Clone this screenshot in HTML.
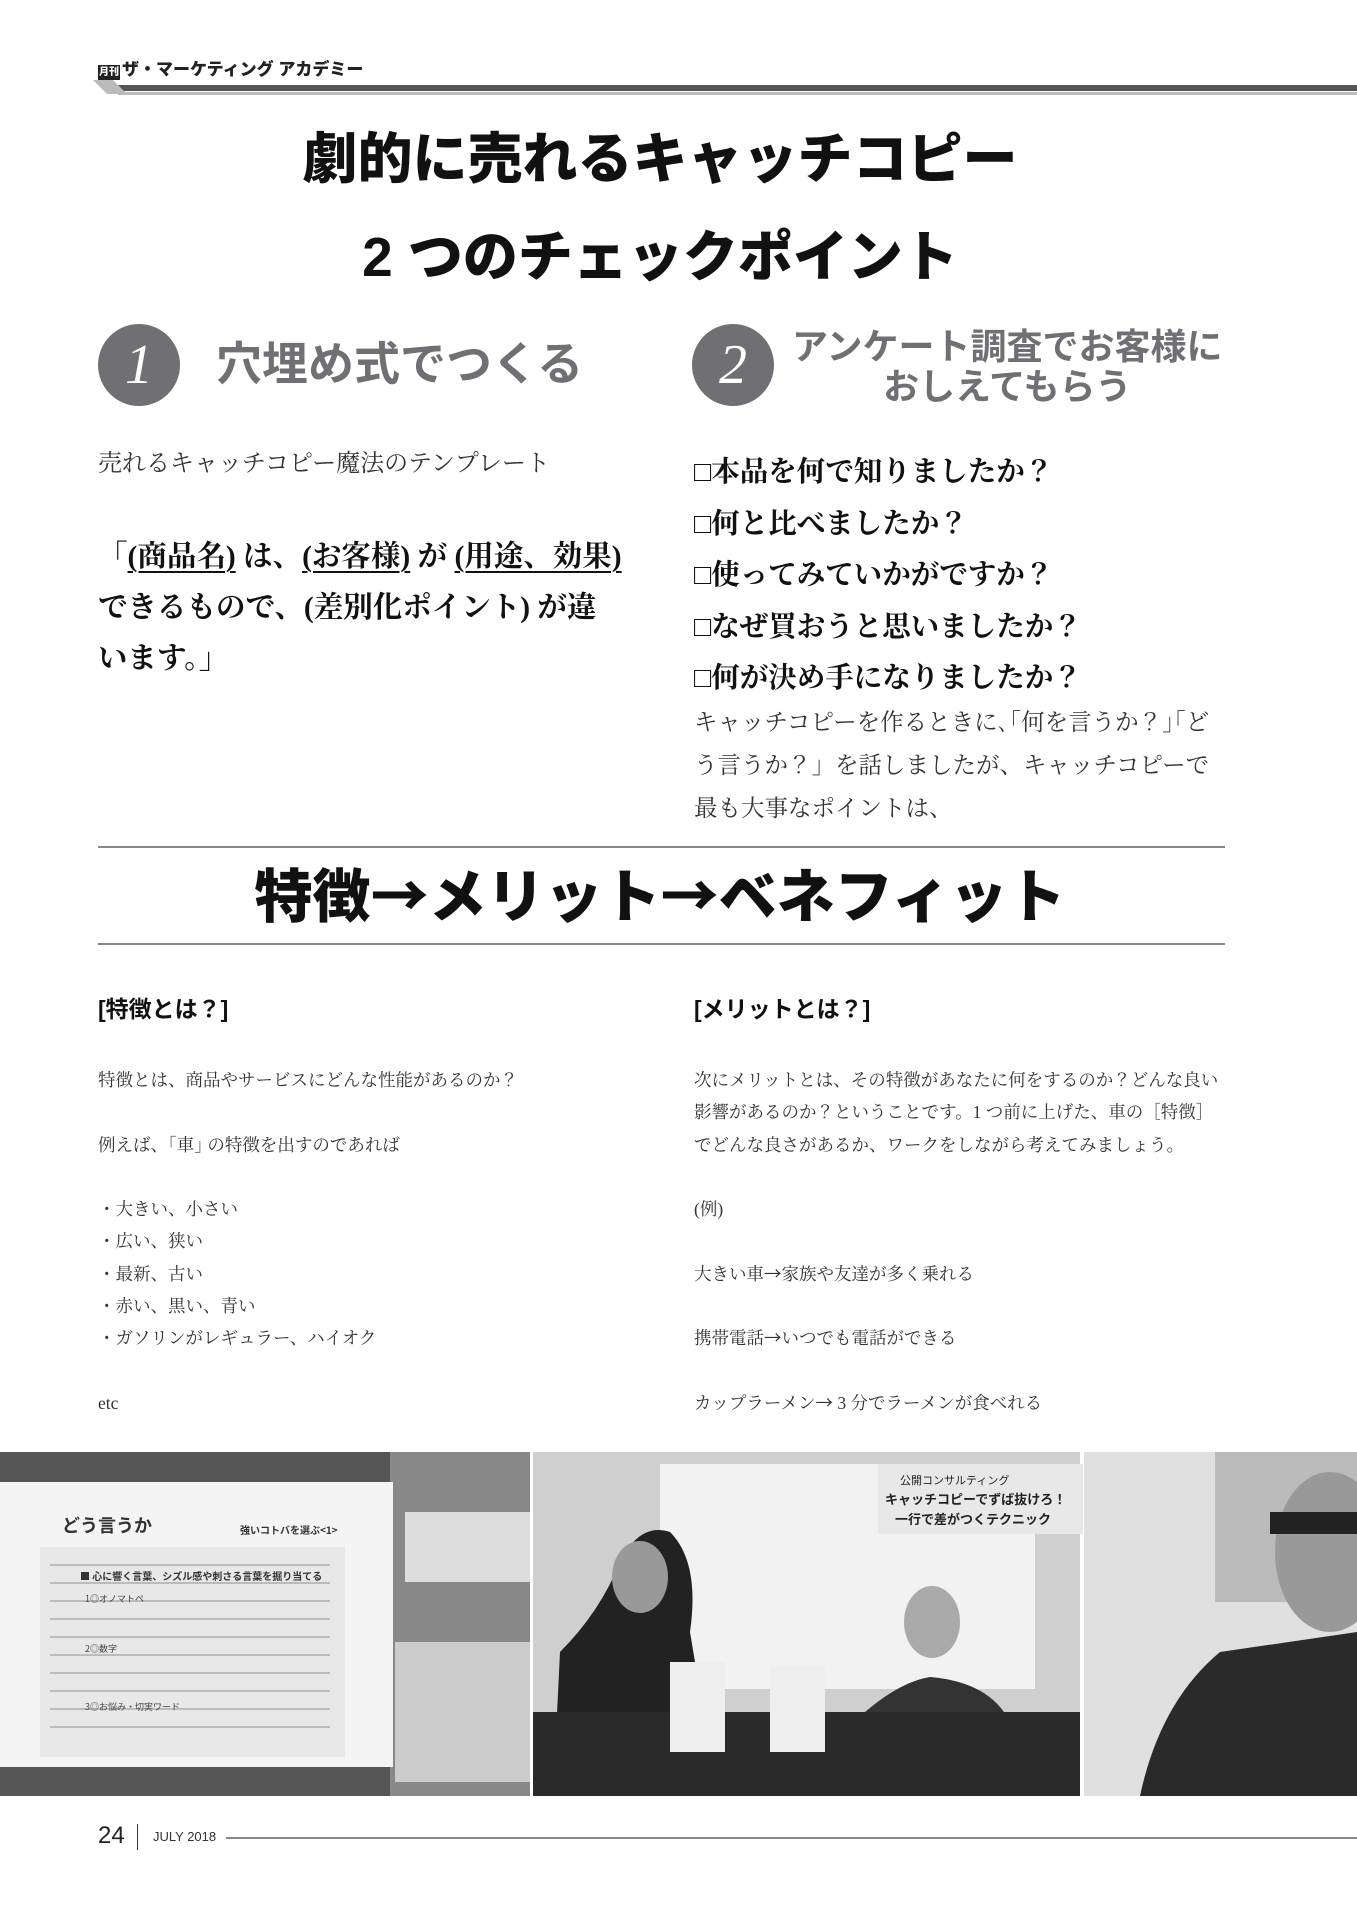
<!DOCTYPE html>
<html><head><meta charset="utf-8"><style>
*{margin:0;padding:0}
body{width:1357px;height:1920px;position:relative;background:#fff;overflow:hidden;font-family:"Liberation Serif","Noto Serif CJK JP",serif;color:#222}
.a{position:absolute;white-space:nowrap;line-height:1.2}
.g{font-family:"Liberation Sans","Noto Sans CJK JP",sans-serif;font-weight:900}
.m{font-family:"Liberation Serif","Noto Serif CJK JP",serif}
.c{position:absolute;border-radius:50%;background:#6f6f74;color:#fff;text-align:center;font-family:"Liberation Serif",serif;font-style:italic}
.hr{position:absolute;height:2px;background:#888}
.ar{font-family:"Noto Sans CJK JP",sans-serif}
u{text-underline-offset:5px;text-decoration-thickness:2px}
</style></head><body>
<div class="a g" style="left:98px;top:60px;font-size:17px;"><span style="background:#222;color:#fff;font-size:10px;padding:2px 1px;margin-right:2px">月刊</span>ザ・マーケティング アカデミー</div>
<div style="position:absolute;left:110px;top:85px;width:1247px;height:6px;background:#555"></div>
<div style="position:absolute;left:100px;top:80px;width:20px;height:14px;background:#bbb;transform:skewX(45deg)"></div>
<div style="position:absolute;left:118px;top:92px;width:1239px;height:3px;background:#bbb"></div>

<div class="a g" style="left:0;width:1320px;text-align:center;top:126px;font-size:55px;color:#111">劇的に売れるキャッチコピー</div>
<div class="a g" style="left:0;width:1320px;text-align:center;top:224px;font-size:55px;color:#111">2 つのチェックポイント</div>

<div class="c" style="left:98px;top:324px;width:82px;height:82px;line-height:82px;font-size:56px">1</div>
<div class="a g" style="left:216px;top:337px;font-size:46px;color:#6f6f74;font-weight:700">穴埋め式でつくる</div>
<div class="c" style="left:692px;top:324px;width:82px;height:82px;line-height:82px;font-size:56px">2</div>
<div class="a g" style="left:792px;top:327px;font-size:36px;color:#6f6f74;font-weight:700;line-height:40px;text-align:center">アンケート調査でお客様に<br>おしえてもらう</div>

<div class="a m" style="left:98px;top:450px;font-size:24px;color:#333">売れるキャッチコピー魔法のテンプレート</div>
<div class="a m" style="left:98px;top:532px;font-size:29.5px;font-weight:700;line-height:51px;color:#111">「<u>(商品名)</u> は、<u>(お客様)</u> が <u>(用途、効果)</u><br>できるもので、(差別化ポイント) が違<br>います。」</div>

<div class="a m" style="left:694px;top:447px;font-size:28.5px;font-weight:700;line-height:51.5px;color:#111">□本品を何で知りましたか？<br>□何と比べましたか？<br>□使ってみていかがですか？<br>□なぜ買おうと思いましたか？<br>□何が決め手になりましたか？</div>
<div class="a m" style="left:694px;top:702px;font-size:23.5px;line-height:43px;color:#333">キャッチコピーを作るときに､｢何を言うか？｣｢ど<br>う言うか？」を話しましたが、キャッチコピーで<br>最も大事なポイントは、</div>

<div class="hr" style="left:98px;top:846px;width:1127px"></div>
<div class="a g" style="left:0;width:1320px;text-align:center;top:858px;font-size:58px;color:#111">特徴<span class="ar">→</span>メリット<span class="ar">→</span>ベネフィット</div>
<div class="hr" style="left:98px;top:943px;width:1127px"></div>

<div class="a g" style="left:98px;top:996px;font-size:23px;font-weight:700;color:#111">[特徴とは？]</div>
<div class="a g" style="left:694px;top:996px;font-size:23px;font-weight:700;color:#111">[メリットとは？]</div>
<div class="a m" style="left:98px;top:1064px;font-size:17.5px;line-height:32.3px;color:#333">特徴とは、商品やサービスにどんな性能があるのか？<br><br>例えば、｢車｣ の特徴を出すのであれば<br><br>・大きい、小さい<br>・広い、狭い<br>・最新、古い<br>・赤い、黒い、青い<br>・ガソリンがレギュラー、ハイオク<br><br>etc</div>
<div class="a m" style="left:694px;top:1064px;font-size:17.5px;line-height:32.3px;color:#333">次にメリットとは、その特徴があなたに何をするのか？どんな良い<br>影響があるのか？ということです。1 つ前に上げた、車の［特徴］<br>でどんな良さがあるか、ワークをしながら考えてみましょう。<br><br>(例)<br><br>大きい車<span class="ar">→</span>家族や友達が多く乗れる<br><br>携帯電話<span class="ar">→</span>いつでも電話ができる<br><br>カップラーメン<span class="ar">→</span> 3 分でラーメンが食べれる</div>

<svg style="position:absolute;left:0;top:1452px" width="1357" height="344" font-family="Noto Sans CJK JP,sans-serif">
<rect x="0" y="0" width="530" height="344" fill="#555"/>
<rect x="390" y="0" width="140" height="344" fill="#888"/>
<rect x="395" y="190" width="135" height="140" fill="#ccc"/>
<rect x="405" y="60" width="125" height="70" fill="#ddd"/>
<rect x="0" y="30" width="393" height="285" fill="#f4f4f4"/>
<rect x="40" y="95" width="305" height="210" fill="#e8e8e8"/>
<g fill="#bbb"><rect x="50" y="112" width="280" height="2"/><rect x="50" y="130" width="280" height="2"/><rect x="50" y="148" width="280" height="2"/><rect x="50" y="166" width="280" height="2"/><rect x="50" y="184" width="280" height="2"/><rect x="50" y="202" width="280" height="2"/><rect x="50" y="220" width="280" height="2"/><rect x="50" y="238" width="280" height="2"/><rect x="50" y="256" width="280" height="2"/><rect x="50" y="274" width="280" height="2"/></g>
<text x="80" y="128" font-size="10" font-weight="bold" fill="#333">■ 心に響く言葉、シズル感や刺さる言葉を掘り当てる</text>
<text x="85" y="150" font-size="9" fill="#444">1◎オノマトペ</text>
<text x="85" y="200" font-size="9" fill="#444">2◎数字</text>
<text x="85" y="258" font-size="9" fill="#444">3◎お悩み・切実ワード</text>
<text x="62" y="80" font-size="18" font-weight="bold" fill="#333">どう言うか</text>
<text x="240" y="82" font-size="10" font-weight="bold" fill="#333">強いコトバを選ぶ&lt;1&gt;</text>
<rect x="533" y="0" width="547" height="344" fill="#cfcfcf"/>
<rect x="660" y="12" width="375" height="225" fill="#f2f2f2"/>
<rect x="878" y="12" width="205" height="70" fill="#e8e8e8"/>
<text x="900" y="32" font-size="11" fill="#222">公開コンサルティング</text>
<text x="885" y="52" font-size="13" font-weight="bold" fill="#222">キャッチコピーでずば抜けろ！</text>
<text x="895" y="72" font-size="13" font-weight="bold" fill="#222">一行で差がつくテクニック</text>
<path d="M553 344 L560 200 Q600 160 620 110 Q640 70 670 80 Q700 110 690 180 L700 240 L680 344Z" fill="#222"/>
<ellipse cx="640" cy="125" rx="28" ry="36" fill="#999"/>
<path d="M860 344 L865 260 Q900 230 930 225 Q990 230 1010 270 L1015 344Z" fill="#333"/>
<ellipse cx="932" cy="170" rx="28" ry="36" fill="#aaa"/>
<rect x="533" y="260" width="547" height="84" fill="#2a2a2a"/>
<rect x="670" y="210" width="55" height="90" fill="#eee"/>
<rect x="770" y="215" width="55" height="85" fill="#eee"/>
<rect x="1084" y="0" width="273" height="344" fill="#e0e0e0"/>
<rect x="1215" y="0" width="142" height="150" fill="#bbb"/>
<path d="M1140 344 Q1160 250 1220 200 L1357 180 L1357 344Z" fill="#2a2a2a"/>
<ellipse cx="1330" cy="100" rx="55" ry="80" fill="#999"/>
<rect x="1270" y="60" width="87" height="22" fill="#222"/>
</svg>

<div class="a" style="left:98px;top:1822px;font-size:24px;font-family:'Liberation Sans',sans-serif;color:#222">24</div>
<div style="position:absolute;left:137px;top:1824px;width:1px;height:26px;background:#333"></div>
<div class="a" style="left:153px;top:1829px;font-size:13px;font-family:'Liberation Sans',sans-serif;color:#333">JULY 2018</div>
<div style="position:absolute;left:226px;top:1837px;width:1131px;height:2px;background:#888"></div>
</body></html>
